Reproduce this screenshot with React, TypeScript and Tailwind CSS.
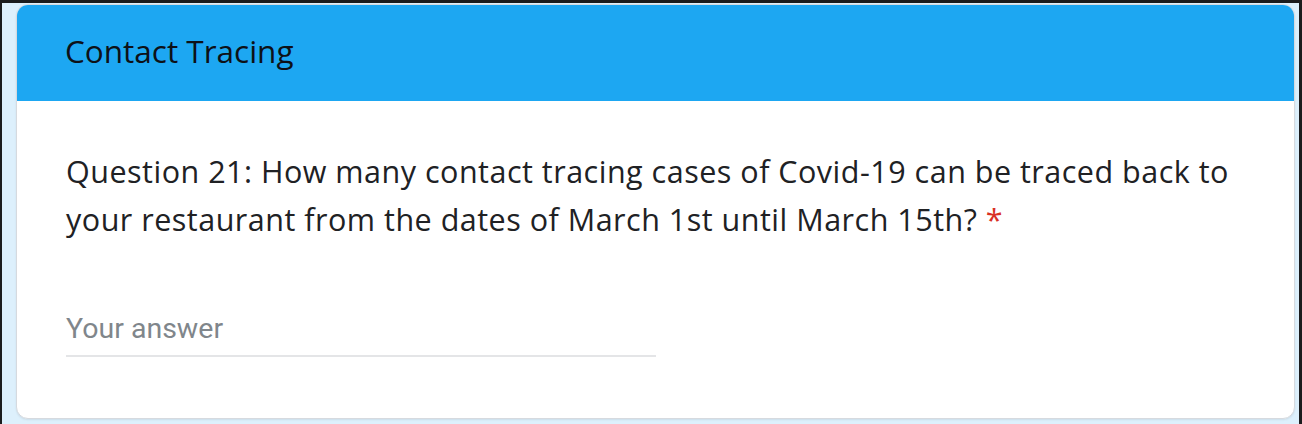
export default function App() {
  return (
    <div className="flex h-[424px] w-[1302px] bg-[#1b1c1d] pl-[2px] pr-[3px] pt-[3px]">
      <div className="flex flex-1 bg-[#ddf0fc] pb-[5px] pl-[14px] pr-[4px] pt-[1px]">
        <div className="flex flex-1 flex-col overflow-hidden rounded-[12px] border border-[#d6dadf] bg-white shadow-[0_1px_2px_rgba(0,0,0,0.08)]">
          {/* Header */}
          <div className="flex h-[96px] shrink-0 items-center bg-[#1da7f2] pl-[48px]">
            <h1
              className="pb-[4px] text-[31.5px] leading-none text-[#0d1117]"
              style={{ fontFamily: '"Open Sans", sans-serif' }}
            >
              Contact Tracing
            </h1>
          </div>

          {/* Question */}
          <div className="flex flex-1 flex-col px-[49px] pt-[46px]">
            <p
              className="text-[30.5px] leading-[48px] tracking-[0.5px] text-[#202124]"
              style={{ fontFamily: '"Open Sans", sans-serif' }}
            >
              Question 21: How many contact tracing cases of Covid-19 can be traced back to your
              restaurant from the dates of March 1st until March 15th?{" "}
              <span className="text-[#d93025]">*</span>
            </p>

            <div className="mt-[72px] w-[590px] border-b-2 border-[#e4e5e7] pb-[11px]">
              <div
                className="text-[28.5px] leading-none text-[#80868b]"
                style={{ fontFamily: "Roboto, sans-serif" }}
              >
                Your answer
              </div>
            </div>
          </div>
        </div>
      </div>
    </div>
  );
}
